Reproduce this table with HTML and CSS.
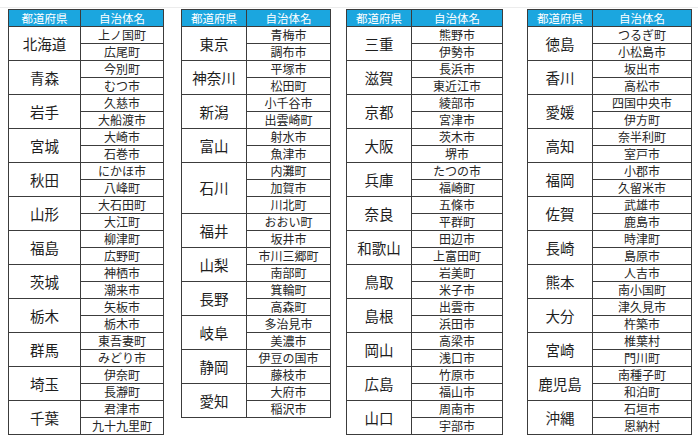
FILE: index.html
```html
<!DOCTYPE html>
<html lang="ja">
<head>
<meta charset="utf-8">
<link rel="stylesheet" href="styles.css">
</head>
<body>
<div class="page">
  <table class="tbl t1">
    <colgroup><col class="c1"><col></colgroup>
    <thead><tr><th>都道府県</th><th>自治体名</th></tr></thead>
    <tbody class="g"><tr><td class="p" rowspan="2">北海道</td><td>上ノ国町</td></tr><tr><td>広尾町</td></tr></tbody>
    <tbody class="g"><tr><td class="p" rowspan="2">青森</td><td>今別町</td></tr><tr><td>むつ市</td></tr></tbody>
    <tbody class="g"><tr><td class="p" rowspan="2">岩手</td><td>久慈市</td></tr><tr><td>大船渡市</td></tr></tbody>
    <tbody class="g"><tr><td class="p" rowspan="2">宮城</td><td>大崎市</td></tr><tr><td>石巻市</td></tr></tbody>
    <tbody class="g"><tr><td class="p" rowspan="2">秋田</td><td>にかほ市</td></tr><tr><td>八峰町</td></tr></tbody>
    <tbody class="g"><tr><td class="p" rowspan="2">山形</td><td>大石田町</td></tr><tr><td>大江町</td></tr></tbody>
    <tbody class="g"><tr><td class="p" rowspan="2">福島</td><td>柳津町</td></tr><tr><td>広野町</td></tr></tbody>
    <tbody class="g"><tr><td class="p" rowspan="2">茨城</td><td>神栖市</td></tr><tr><td>潮来市</td></tr></tbody>
    <tbody class="g"><tr><td class="p" rowspan="2">栃木</td><td>矢板市</td></tr><tr><td>栃木市</td></tr></tbody>
    <tbody class="g"><tr><td class="p" rowspan="2">群馬</td><td>東吾妻町</td></tr><tr><td>みどり市</td></tr></tbody>
    <tbody class="g"><tr><td class="p" rowspan="2">埼玉</td><td>伊奈町</td></tr><tr><td>長瀞町</td></tr></tbody>
    <tbody class="g"><tr><td class="p" rowspan="2">千葉</td><td>君津市</td></tr><tr><td>九十九里町</td></tr></tbody>
  </table>

  <table class="tbl t2">
    <colgroup><col class="c1"><col></colgroup>
    <thead><tr><th>都道府県</th><th>自治体名</th></tr></thead>
    <tbody class="g"><tr><td class="p" rowspan="2">東京</td><td>青梅市</td></tr><tr><td>調布市</td></tr></tbody>
    <tbody class="g"><tr><td class="p" rowspan="2">神奈川</td><td>平塚市</td></tr><tr><td>松田町</td></tr></tbody>
    <tbody class="g"><tr><td class="p" rowspan="2">新潟</td><td>小千谷市</td></tr><tr><td>出雲崎町</td></tr></tbody>
    <tbody class="g"><tr><td class="p" rowspan="2">富山</td><td>射水市</td></tr><tr><td>魚津市</td></tr></tbody>
    <tbody class="g"><tr><td class="p" rowspan="3">石川</td><td>内灘町</td></tr><tr><td>加賀市</td></tr><tr><td>川北町</td></tr></tbody>
    <tbody class="g"><tr><td class="p" rowspan="2">福井</td><td>おおい町</td></tr><tr><td>坂井市</td></tr></tbody>
    <tbody class="g"><tr><td class="p" rowspan="2">山梨</td><td>市川三郷町</td></tr><tr><td>南部町</td></tr></tbody>
    <tbody class="g"><tr><td class="p" rowspan="2">長野</td><td>箕輪町</td></tr><tr><td>高森町</td></tr></tbody>
    <tbody class="g"><tr><td class="p" rowspan="2">岐阜</td><td>多治見市</td></tr><tr><td>美濃市</td></tr></tbody>
    <tbody class="g"><tr><td class="p" rowspan="2">静岡</td><td>伊豆の国市</td></tr><tr><td>藤枝市</td></tr></tbody>
    <tbody class="g"><tr><td class="p" rowspan="2">愛知</td><td>大府市</td></tr><tr><td>稲沢市</td></tr></tbody>
  </table>

  <table class="tbl t3">
    <colgroup><col class="c1"><col></colgroup>
    <thead><tr><th>都道府県</th><th>自治体名</th></tr></thead>
    <tbody class="g"><tr><td class="p" rowspan="2">三重</td><td>熊野市</td></tr><tr><td>伊勢市</td></tr></tbody>
    <tbody class="g"><tr><td class="p" rowspan="2">滋賀</td><td>長浜市</td></tr><tr><td>東近江市</td></tr></tbody>
    <tbody class="g"><tr><td class="p" rowspan="2">京都</td><td>綾部市</td></tr><tr><td>宮津市</td></tr></tbody>
    <tbody class="g"><tr><td class="p" rowspan="2">大阪</td><td>茨木市</td></tr><tr><td>堺市</td></tr></tbody>
    <tbody class="g"><tr><td class="p" rowspan="2">兵庫</td><td>たつの市</td></tr><tr><td>福崎町</td></tr></tbody>
    <tbody class="g"><tr><td class="p" rowspan="2">奈良</td><td>五條市</td></tr><tr><td>平群町</td></tr></tbody>
    <tbody class="g"><tr><td class="p" rowspan="2">和歌山</td><td>田辺市</td></tr><tr><td>上富田町</td></tr></tbody>
    <tbody class="g"><tr><td class="p" rowspan="2">鳥取</td><td>岩美町</td></tr><tr><td>米子市</td></tr></tbody>
    <tbody class="g"><tr><td class="p" rowspan="2">島根</td><td>出雲市</td></tr><tr><td>浜田市</td></tr></tbody>
    <tbody class="g"><tr><td class="p" rowspan="2">岡山</td><td>高梁市</td></tr><tr><td>浅口市</td></tr></tbody>
    <tbody class="g"><tr><td class="p" rowspan="2">広島</td><td>竹原市</td></tr><tr><td>福山市</td></tr></tbody>
    <tbody class="g"><tr><td class="p" rowspan="2">山口</td><td>周南市</td></tr><tr><td>宇部市</td></tr></tbody>
  </table>

  <table class="tbl t4">
    <colgroup><col class="c1"><col></colgroup>
    <thead><tr><th>都道府県</th><th>自治体名</th></tr></thead>
    <tbody class="g"><tr><td class="p" rowspan="2">徳島</td><td>つるぎ町</td></tr><tr><td>小松島市</td></tr></tbody>
    <tbody class="g"><tr><td class="p" rowspan="2">香川</td><td>坂出市</td></tr><tr><td>高松市</td></tr></tbody>
    <tbody class="g"><tr><td class="p" rowspan="2">愛媛</td><td>四国中央市</td></tr><tr><td>伊方町</td></tr></tbody>
    <tbody class="g"><tr><td class="p" rowspan="2">高知</td><td>奈半利町</td></tr><tr><td>室戸市</td></tr></tbody>
    <tbody class="g"><tr><td class="p" rowspan="2">福岡</td><td>小郡市</td></tr><tr><td>久留米市</td></tr></tbody>
    <tbody class="g"><tr><td class="p" rowspan="2">佐賀</td><td>武雄市</td></tr><tr><td>鹿島市</td></tr></tbody>
    <tbody class="g"><tr><td class="p" rowspan="2">長崎</td><td>時津町</td></tr><tr><td>島原市</td></tr></tbody>
    <tbody class="g"><tr><td class="p" rowspan="2">熊本</td><td>人吉市</td></tr><tr><td>南小国町</td></tr></tbody>
    <tbody class="g"><tr><td class="p" rowspan="2">大分</td><td>津久見市</td></tr><tr><td>杵築市</td></tr></tbody>
    <tbody class="g"><tr><td class="p" rowspan="2">宮崎</td><td>椎葉村</td></tr><tr><td>門川町</td></tr></tbody>
    <tbody class="g"><tr><td class="p" rowspan="2">鹿児島</td><td>南種子町</td></tr><tr><td>和泊町</td></tr></tbody>
    <tbody class="g"><tr><td class="p" rowspan="2">沖縄</td><td>石垣市</td></tr><tr><td>恩納村</td></tr></tbody>
  </table>
</div>
</body>
</html>
```
FILE: styles.css
```css
html, body {
  margin: 0;
  padding: 0;
  background: #ffffff;
}
body {
  font-family: "Noto Sans CJK JP", "Noto Sans", sans-serif;
  color: #262626;
}
.page {
  display: flex;
  align-items: flex-start;
  padding: 1px 0 0 8px;
  border-top: 1px solid #ececec;
  margin-top: 7px;
}
.tbl {
  border-collapse: collapse;
  table-layout: fixed;
  border: 1px solid #3c3c3c;
}
.tbl th {
  background: #1ba6df;
  color: #ffffff;
  font-weight: normal;
  font-size: 11.5px;
  height: 16px;
  padding: 0;
  line-height: 16px;
  border-left: 1px solid #3c3c3c;
  border-bottom: 1px solid #3c3c3c;
}
.tbl td {
  height: 16px;
  padding: 0;
  text-align: center;
  font-size: 12px;
  line-height: 16px;
  border: 1px solid #3c3c3c;
  white-space: nowrap;
  overflow: hidden;
}
.tbl td.p {
  font-size: 14.5px;
  color: #1e1e1e;
}
.tbl .g {
  border-top: 1px solid #2e2e2e;
}
.t1 { width: 156px; }
.t1 .c1 { width: 72px; }
.t2 { width: 150px; margin-left: 17px; }
.t2 .c1 { width: 65px; }
.t3 { width: 157px; margin-left: 15px; }
.t3 .c1 { width: 65px; }
.t4 { width: 165px; margin-left: 24px; }
.t4 .c1 { width: 65px; }
```
